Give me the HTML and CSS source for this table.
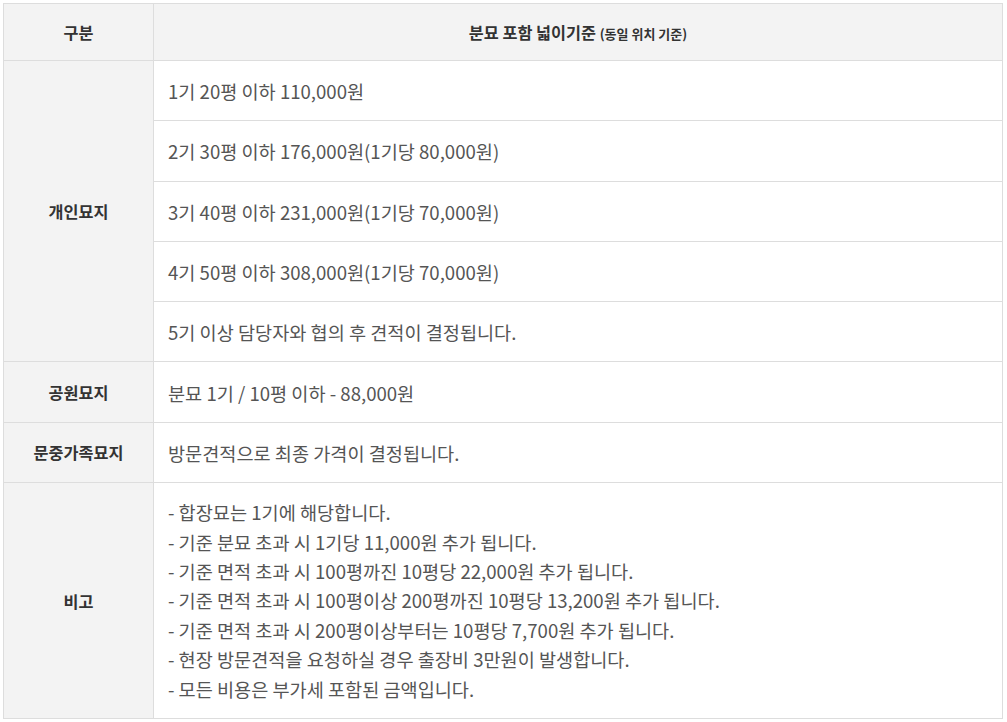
FILE: index.html
```html
<!DOCTYPE html>
<html>
  <head>
    <meta name="viewport" content="width=device-width, initial-scale=1" />
    <title>분묘 가격표</title>
    <link rel="stylesheet" href="styles.css">
  </head>

  <body>
    <table class="price-table">
      <colgroup>
        <col class="col-label" />
        <col />
      </colgroup>
      <thead>
        <tr>
          <th>구분</th>
          <th>분묘 포함 넓이기준 <span class="small">(동일 위치 기준)</span></th>
        </tr>
      </thead>
      <tbody>
        <tr>
          <th rowspan="5">개인묘지</th>
          <td>1기 20평 이하 110,000원</td>
        </tr>
        <tr>
          <td>2기 30평 이하 176,000원(1기당 80,000원)</td>
        </tr>
        <tr>
          <td>3기 40평 이하 231,000원(1기당 70,000원)</td>
        </tr>
        <tr>
          <td>4기 50평 이하 308,000원(1기당 70,000원)</td>
        </tr>
        <tr>
          <td>5기 이상 담당자와 협의 후 견적이 결정됩니다.</td>
        </tr>
        <tr>
          <th>공원묘지</th>
          <td>분묘 1기 / 10평 이하 - 88,000원</td>
        </tr>
        <tr>
          <th>문중가족묘지</th>
          <td>방문견적으로 최종 가격이 결정됩니다.</td>
        </tr>
        <tr>
          <th>비고</th>
          <td class="notes">
            - 합장묘는 1기에 해당합니다.<br />
            - 기준 분묘 초과 시 1기당 11,000원 추가 됩니다.<br />
            - 기준 면적 초과 시 100평까진 10평당 22,000원 추가 됩니다.<br />
            - 기준 면적 초과 시 100평이상 200평까진 10평당 13,200원 추가 됩니다.<br />
            - 기준 면적 초과 시 200평이상부터는 10평당 7,700원 추가 됩니다.<br />
            - 현장 방문견적을 요청하실 경우 출장비 3만원이 발생합니다.<br />
            - 모든 비용은 부가세 포함된 금액입니다.
          </td>
        </tr>
      </tbody>
    </table>
  </body>
</html>
```

FILE: styles.css
```css
* {
  box-sizing: border-box;
}

body {
  margin: 3px;
  font-family: "Noto Sans CJK KR", "Noto Sans", sans-serif;
  color: #555;
  background-color: white;
}

.price-table {
  width: 1000px;
  border-collapse: collapse;
  border: 1px solid #ddd;
}

.col-label {
  width: 150px;
}

.price-table th,
.price-table td {
  border: 1px solid #ddd;
}

.price-table th {
  background-color: #f3f3f3;
  color: #333;
  font-size: 16.3px;
  font-weight: bold;
  text-align: center;
}

.price-table thead th {
  height: 57px;
  padding: 0 10px;
}

.small {
  font-size: 13px;
}

.price-table td {
  height: 60.3px;
  padding: 15px 14px;
  font-size: 18.6px;
  line-height: 29px;
  text-align: left;
}

.price-table td.notes {
  height: 236px;
  padding: 14px 14px 15px;
  line-height: 29.4px;
}
```
